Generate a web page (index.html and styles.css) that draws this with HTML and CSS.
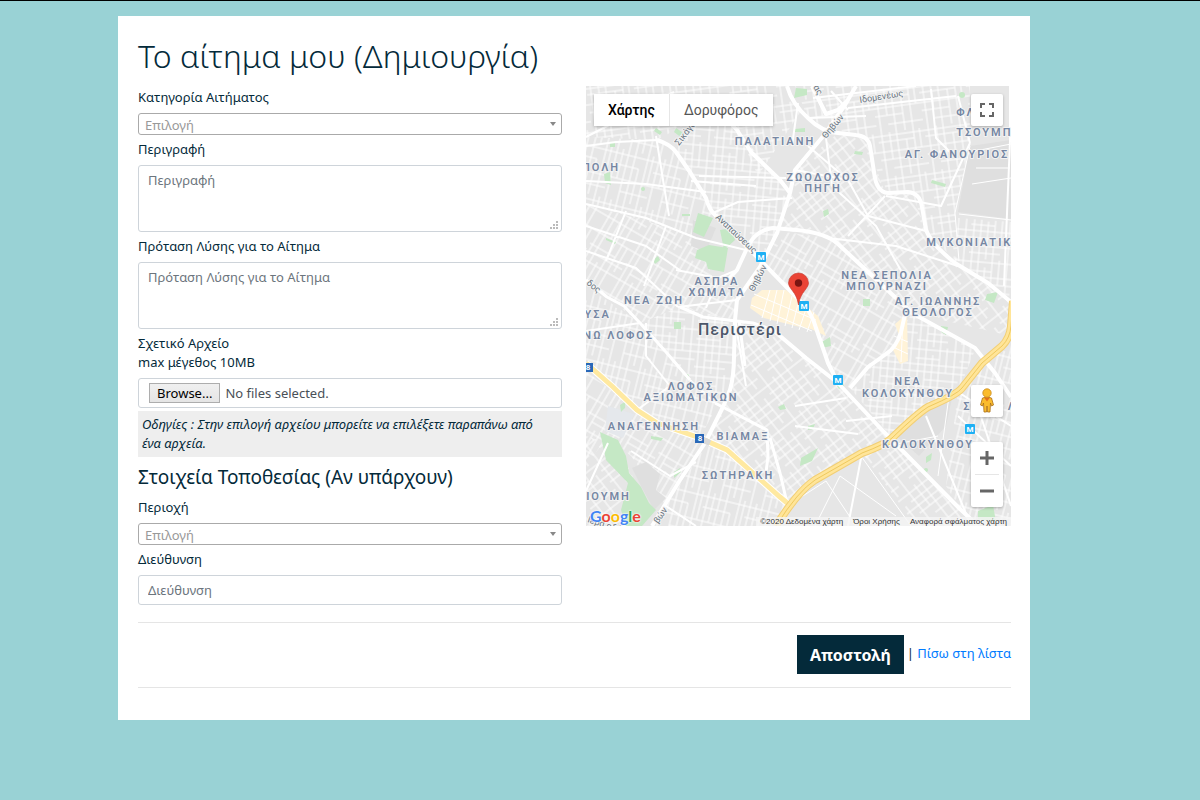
FILE: index.html
```html
<!DOCTYPE html>
<html lang="el">
<head>
<meta charset="utf-8">
<meta name="viewport" content="width=device-width, initial-scale=1">
<title>Το αίτημα μου (Δημιουργία)</title>
<link rel="stylesheet" href="styles.css">
</head>
<body>
<main class="panel">
  <h1 class="title">Το αίτημα μου (Δημιουργία)</h1>
  <form class="request">
    <div class="columns">
      <div class="fields">
        <div class="field">
          <label for="category">Κατηγορία Αιτήματος</label>
          <div class="select"><select id="category"><option>Επιλογή</option></select></div>
        </div>
        <div class="field">
          <label for="description">Περιγραφή</label>
          <textarea id="description" class="control" placeholder="Περιγραφή"></textarea>
        </div>
        <div class="field">
          <label for="solution">Πρόταση Λύσης για το Αίτημα</label>
          <textarea id="solution" class="control" placeholder="Πρόταση Λύσης για το Αίτημα"></textarea>
        </div>
        <div class="field">
          <label for="files">Σχετικό Αρχείο<br>max μέγεθος 10MB</label>
          <label class="control file">
            <input id="files" class="file-input" type="file" multiple>
            <span class="browse">Browse...</span>
            <span class="file-status">No files selected.</span>
          </label>
        </div>
        <p class="hint">Οδηγίες : Στην επιλογή αρχείου μπορείτε να επιλέξετε παραπάνω από ένα αρχεία.</p>
        <h2 class="subtitle">Στοιχεία Τοποθεσίας (Αν υπάρχουν)</h2>
        <div class="field">
          <label for="area">Περιοχή</label>
          <div class="select"><select id="area"><option>Επιλογή</option></select></div>
        </div>
        <div class="field">
          <label for="address">Διεύθυνση</label>
          <input id="address" class="control" type="text" placeholder="Διεύθυνση">
        </div>
      </div>

      <section class="map" aria-label="Χάρτης">
        <svg class="map-canvas" viewBox="0 0 425 440" preserveAspectRatio="xMidYMid slice">
          <defs>
            <pattern id="g1" width="43" height="52" patternUnits="userSpaceOnUse" patternTransform="rotate(14)">
              <path class="st" d="M3 0V52M9 0V30M15 0V52M22 0V52M28 16V52M35 0V52M40 0V30M0 5H43M0 16H28M0 30H43M15 42H43"/>
            </pattern>
            <pattern id="g2" width="47" height="44" patternUnits="userSpaceOnUse" patternTransform="rotate(-8)">
              <path class="st" d="M4 0V44M12 0V27M19 0V44M28 9V44M36 0V44M42 0V19M0 3H47M0 9H36M0 19H47M0 27H28M12 36H47"/>
            </pattern>
            <pattern id="g3" width="41" height="49" patternUnits="userSpaceOnUse" patternTransform="rotate(30)">
              <path class="st" d="M3 0V49M9 0V49M16 0V22M22 0V49M29 0V49M35 22V49M0 4H41M0 22H41M0 36H29M9 43H41"/>
            </pattern>
            <pattern id="g4" width="45" height="43" patternUnits="userSpaceOnUse" patternTransform="rotate(-38)">
              <path class="st" d="M4 0V43M13 0V26M20 0V43M29 0V43M38 12V43M0 4H45M0 12H29M0 19H45M0 26H38M13 35H45"/>
            </pattern>
            <pattern id="g5" width="44" height="46" patternUnits="userSpaceOnUse" patternTransform="rotate(5)">
              <path class="st" d="M3 0V46M10 0V46M17 8V46M24 0V46M31 0V25M39 0V46M0 3H44M0 12H24M0 18H44M0 25H44M10 33H44M0 40H31"/>
            </pattern>
          </defs>
          <rect width="425" height="440" fill="#e6e6e6"/>
          <path fill="url(#g2)" d="M0 0H201L215 25 172 90 151 44 125 24 71 54 0 51Z"/>
          <path fill="url(#g1)" d="M0 51 71 54 90 66 127 127 105 150 60 135 0 118Z"/>
          <path fill="url(#g5)" d="M86 62 127 24 151 44 204 107 191 147 177 177 127 127Z"/>
          <path fill="url(#g3)" d="M0 118 60 135 112 152 127 192 151 214 149 234 94 221 54 237 0 194Z"/>
          <path fill="url(#g1)" d="M0 200 54 237 104 294 132 318 114 352 51 324 0 277Z"/>
          <path fill="url(#g5)" d="M54 237 94 221 149 234 146 294 132 318 104 294Z"/>
          <path fill="url(#g4)" d="M149 235 187 244 252 297 306 352 229 394 204 421 141 364 119 357 146 294Z"/>
          <path fill="url(#g3)" d="M0 285 51 324 114 352 119 357 80 420 45 370 22 350 0 380Z"/>
          <path fill="url(#g4)" d="M0 350 22 357 45 385 60 440H0Z"/>
          <path fill="url(#g1)" d="M67 440 119 360 141 364 204 421 190 440Z"/>
          <path fill="url(#g4)" d="M204 107 209 84 252 47 279 52 286 71 299 106 326 107 341 147 369 177 425 216V250L326 227 276 181 242 152 191 143Z"/>
          <path fill="url(#g2)" d="M209 0H384V57L369 127 372 177 341 147 326 107 299 106 279 52 252 47 222 32Z"/>
          <path fill="url(#g5)" d="M372 132 425 136V216L369 177Z"/>
          <path fill="url(#g3)" d="M191 145 242 152 276 181 326 227 307 261 264 302 252 297 218 221 177 177Z"/>
          <path fill="url(#g5)" d="M326 227 389 264 372 306 342 321 306 352 264 302 307 261Z"/>
          <path fill="url(#g1)" d="M396 277 425 255V440H385L360 400 372 306Z"/>
          <path fill="url(#g4)" d="M306 352 372 421 385 440H330L276 367Z"/>
          <path fill="#dfdfdf" d="M384 60 425 54V133L372 126ZM107 134 130 142 120 166 105 160ZM342 325 366 312 360 340 333 370 310 350ZM46 382 60 376 74 388 70 404 80 412 68 424 55 400Z"/>
          <path class="st" d="M384 60 369 127 373 175M373 128 425 134M384 66 425 58M390 82H424M386 98 425 92M363 310 352 390M209 415 240 395 270 440M229 440 254 390 310 430M275 370 325 440M300 360 352 350"/>
          <path fill="#e5e8ec" d="M22 320 48 328 37 352 19 345Z"/>

          <!-- parks -->
          <g fill="#c5e8c5">
            <path d="M14 346 32 354 40 370 43 387 55 401 63 417 70 424 56 440H40L35 424 42 397 20 374Z"/>
            <path d="M112 127 127 132 118 151 107 146ZM111 164 123 159 142 162 138 186 122 183 120 176 109 172ZM134 144 146 142 149 154 138 164Z"/>
            <path d="M210 2 221 3 221 9 208 12ZM24 56h5v5h-5ZM18 88l6-2 1 13-6-2ZM70 42l6 4-2 3-6-4ZM90 42l9 6-3 4-8-6ZM96 128h8v2h-8ZM67 174l5-4 2 4-5 4ZM20 152l10 4-1 2-9-4ZM401 208l11-2-4 11-9-3ZM222 340l7-2-2 5-5 1ZM251 300l6-3 1 3-5 3ZM392 425l15-6 3 17-18-3ZM88 236h7v7h-7ZM34 319l6-4-1 7-4 4ZM346 94l14 4-1 3-14-4ZM237 125l5-2 1 5-5 3ZM209 43l10-1v4h-10ZM269 65l8 1-1 3-8-1ZM88 386l6-4 1 4-7 6ZM192 321l6-3 2 5-6 1ZM234 257l10-6 1 9-9 2ZM215 372l17-10-6 13-12 5ZM355 240l7 1-2 8-5-3ZM277 213h7v7h-7ZM340 371l6-4-1 7-5 3ZM65 350l12 2-2 3-10-2Z"/>
            <circle cx="376" cy="9" r="3"/><circle cx="101" cy="290" r="2"/><circle cx="340" cy="384" r="2"/><circle cx="57" cy="103" r="2"/>
          </g>
          <path fill="#fff3d8" d="M176 204 200 204 232 230 240 250 225 243 210 240 178 232 164 222 166 212ZM309 238 321 228 322 275 314 278 306 262 314 252Z"/>
          <path class="st" d="M168 208 230 234M165 219 226 245M184 204 176 232M191 204 184 235M198 204 191 238M206 210 199 240M213 214 206 242M221 220 213 244M228 226 221 246M309 262 322 268M308 250 322 256M317 232 315 276"/>

          <!-- secondary and main roads -->
          <g class="road minor">
            <path d="M0 51 60 20 88 6M71 54 30 56 0 60M0 118 60 132 110 152 160 164M70 50 78 100 83 130M127 127 152 116 206 112M113 90 200 92M105 95 170 100M222 60 262 94 282 130 340 145M240 52 246 100 290 140 318 190M209 84 262 94M242 152 310 160 372 180M299 110 262 150M227 12 330 0M262 22 370 10M372 10 384 57M345 3 350 52 370 72M384 57 355 120 300 110M0 95 60 98 120 106M212 17 206 60M222 32 280 30M245 5 262 24M151 214 92 221M151 184 132 192 90 184M132 192 120 222M260 335 306 330M209 320 260 312M209 340 272 348"/>
            <path d="M149 234 160 300M104 294 129 317M60 237 60 270 84 300M84 300 51 324M0 245 54 237M45 365 84 390 110 376M80 420 110 440M22 357 0 405M276 367 262 440M340 330 385 440M372 306 425 340M372 330 425 380M390 316 425 420M0 140 60 160 95 185M40 125 20 175M80 140 58 200M0 165 50 182 92 221"/>
          </g>
          <g class="road">
            <path d="M71 54Q84 58 90 66L104 86 120 112Q123 124 130 130L177 177 218 219Q226 228 230 242L242 277 252 297 299 347 372 421 392 440"/>
            <path d="M201 0Q206 18 222 32 236 46 252 47L270 49Q282 50 284 60L288 86Q290 106 302 107L322 106Q334 107 336 121L340 144Q345 158 369 177L402 197 425 216"/>
            <path d="M270 0 259 19 239 48 209 84 204 107 191 147 174 181 151 214 149 234 148 270Q148 290 144 304L137 321 119 357 94 394 66 440"/>
            <path d="M226 0 240 28 252 24 262 14M138 198 151 184 162 160Q170 144 187 142L211 144Q240 147 252 158L280 184 326 227 389 262 409 287 425 311"/>
            <path d="M320 224 315 246Q310 262 300 268L282 281 264 302M125 16 151 44 165 66 194 94 204 107M187 244 220 272 252 297"/>
            <path class="mid" d="M0 194 21 211 38 220 54 237 80 266 104 294M94 221 117 231 167 237 187 244M129 317 181 344 182 371 180 386M184 352 194 387 201 417M153 234 159 280"/>
          </g>
          <path d="M424 0V55L418 200" class="road minor"/>

          <!-- highways -->
          <path class="hw-edge small" d="M0 277 27 301 51 324 71 337 114 352 141 364 167 387 194 411 206 421"/>
          <path class="hw small" d="M0 277 27 301 51 324 71 337 114 352 141 364 167 387 194 411 206 421"/>
          <path d="M115 353 124 357" stroke="#d9d9d9" stroke-width="6"/>
          <path class="hw-edge" d="M427 215 425 240Q424 252 416 260L396 277 376 302Q372 308 342 321 332 327 306 352 300 358 276 367L229 394Q212 405 190 440"/>
          <path class="hw" d="M427 215 425 240Q424 252 416 260L396 277 376 302Q372 308 342 321 332 327 306 352 300 358 276 367L229 394Q212 405 190 440"/>
          <path d="M427 215 425 240Q424 252 416 260L396 277 376 302Q372 308 342 321 332 327 306 352 300 358 276 367L229 394Q212 405 190 440" fill="none" stroke="#efc95e" stroke-width="1"/>

          <!-- road names -->
          <g class="street">
            <text transform="translate(93 60) rotate(-52)">Σικάγο</text>
            <text transform="translate(129 132) rotate(43)">Αναπαύσεως</text>
            <text transform="translate(168 206) rotate(-63)">Θηβών</text>
            <text transform="translate(240 53) rotate(-50)">Θηβών</text>
            <text transform="translate(274 17) rotate(-9)">Ιδομενέως</text>
            <text transform="translate(227 1) rotate(60)">ας</text>
            <text transform="translate(0 198) rotate(38)">δος</text>
            <text transform="translate(1 436) rotate(18)">Ιερά οδός</text>
            <text transform="translate(72 438) rotate(-55)">βών</text>
          </g>

          <!-- districts -->
          <g class="place">
            <text x="189" y="59">ΠΑΛΑΤΙΑΝΗ</text>
            <text x="15" y="85">ΠΟΛΗ</text>
            <text x="237" y="95">ΖΩΟΔΟΧΟΣ</text>
            <text x="237" y="106">ΠΗΓΗ</text>
            <text x="380" y="30">ΦΛ</text>
            <text x="403" y="50">ΤΣΟΥΜΠΑ</text>
            <text x="371" y="72">ΑΓ. ΦΑΝΟΥΡΙΟΣ</text>
            <text x="388" y="160">ΜΥΚΟΝΙΑΤΙΚΑ</text>
            <text x="301" y="193">ΝΕΑ ΣΕΠΟΛΙΑ</text>
            <text x="301" y="204">ΜΠΟΥΡΝΑΖΙ</text>
            <text x="352" y="219">ΑΓ. ΙΩΑΝΝΗΣ</text>
            <text x="352" y="230">ΘΕΟΛΟΓΟΣ</text>
            <text x="131" y="199">ΑΣΠΡΑ</text>
            <text x="131" y="210">ΧΩΜΑΤΑ</text>
            <text x="68" y="218">ΝΕΑ ΖΩΗ</text>
            <text x="7" y="232">ΟΥΣΑ</text>
            <text x="28" y="253">ΑΝΩ ΛΟΦΟΣ</text>
            <text x="105" y="304">ΛΟΦΟΣ</text>
            <text x="105" y="315">ΑΞΙΩΜΑΤΙΚΩΝ</text>
            <text x="68" y="344">ΑΝΑΓΕΝΝΗΣΗ</text>
            <text x="157" y="354">ΒΙΑΜΑΞ</text>
            <text x="152" y="393">ΣΩΤΗΡΑΚΗ</text>
            <text x="18" y="414">ΡΙΟΥΜΗ</text>
            <text x="322" y="299">ΝΕΑ</text>
            <text x="322" y="311">ΚΟΛΟΚΥΝΘΟΥ</text>
            <text x="342" y="362">ΚΟΛΟΚΥΝΘΟΥ</text>
            <text x="404" y="324">ΣΤΑΘ. Λ</text>
          </g>
          <text class="city" x="154" y="249">Περιστέρι</text>

          <!-- metro and highway badges -->
          <g class="metro">
            <rect x="170" y="166" width="10" height="10" rx="1"/><text x="175" y="174">M</text>
            <rect x="213" y="215" width="10" height="10" rx="1"/><text x="218" y="223">M</text>
            <rect x="247" y="289" width="10" height="10" rx="1"/><text x="252" y="297">M</text>
            <rect x="379" y="338" width="10" height="10" rx="1"/><text x="384" y="346">M</text>
          </g>
          <g class="route">
            <rect x="-2" y="277" width="9" height="9"/><text x="2" y="284">8</text>
            <rect x="109" y="348" width="9" height="9"/><text x="114" y="355">8</text>
          </g>

          <!-- pin -->
          <path d="M212.500 219C211 210 208 207 205.500 203.500 203.500 200.500 202.500 199 202.500 197A10 10 0 0 1 222.500 197C222.500 199 221.500 200.500 219.500 203.500 217 207 214 210 212.500 219Z" fill="#ea4335" stroke="#c5372c" stroke-width=".6"/>
          <circle cx="212.500" cy="197" r="3.700" fill="#7a1512"/>
        </svg>

        <div class="map-types">
          <button type="button" class="map-type active">Χάρτης</button>
          <button type="button" class="map-type">Δορυφόρος</button>
        </div>
        <button type="button" class="map-button fullscreen" aria-label="Πλήρης οθόνη">
          <svg width="16" height="16" viewBox="0 0 16 16"><path d="M2 6V2H6M10 2H14V6M14 10V14H10M6 14H2V10" fill="none" stroke="#666" stroke-width="2"/></svg>
        </button>
        <div class="map-tools">
          <button type="button" class="map-button" aria-label="Street View">
            <svg width="16" height="26" viewBox="0 0 16 26"><path d="M3.500 10Q8 8 12.500 10L14.500 17 12.500 18 11.500 15 11 24H8.500L8 18 7.500 24H5L4.500 15 3.500 18 1.500 17Z" fill="#fbbc2c" stroke="#a96f18" stroke-width=".8"/><path d="M5 9.500H11L8 13.500Z" fill="#e2711d"/><circle cx="8" cy="5" r="4.200" fill="#fbbc2c" stroke="#c88a1d" stroke-width=".8"/></svg>
          </button>
          <div class="zoom">
            <button type="button" aria-label="Μεγέθυνση"><svg width="14" height="14" viewBox="0 0 14 14"><path d="M0 7H14M7 0V14" stroke="#666" stroke-width="3"/></svg></button>
            <button type="button" aria-label="Σμίκρυνση"><svg width="14" height="14" viewBox="0 0 14 14"><path d="M0 7H14" stroke="#666" stroke-width="3"/></svg></button>
          </div>
        </div>
        <a class="google" href="#" aria-label="Google"><span class="blue">G</span><span class="red">o</span><span class="yellow">o</span><span class="blue">g</span><span class="green">l</span><span class="red">e</span></a>
        <div class="credits">
          <span>©2020 Δεδομένα χάρτη</span>
          <a href="#">Όροι Χρήσης</a>
          <a href="#">Αναφορά σφάλματος χάρτη</a>
        </div>
      </section>
    </div>

    <div class="actions">
      <button type="submit" class="submit">Αποστολή</button>
      <span class="back">| <a href="#">Πίσω στη λίστα</a></span>
    </div>
  </form>
</main>
</body>
</html>
```
FILE: styles.css
```css
* { box-sizing: border-box; }

body {
  margin: 0;
  padding: 15px 170px 80px 118px;
  border-top: 1px solid #000;
  background: #99d2d5;
  color: #042a3a;
  font: 13px/19px "Noto Sans", "Open Sans", sans-serif;
}

button, input, select, textarea { font: inherit; }
a { color: #007bff; text-decoration: none; }

.panel {
  padding: 20px 19px 32px 20px;
  background: #fff;
}

.title {
  margin: 0 0 11px;
  padding-top: 1px;
  font-size: 32px;
  font-weight: 300;
  line-height: 38px;
}

.columns {
  display: grid;
  grid-template-columns: 424fr 425fr;
  gap: 24px;
  align-items: start;
}

.fields { padding-top: 2px; }
.field { display: flex; flex-direction: column; gap: 6px; }
.field + .field { margin-top: 5px; }

.control {
  display: block;
  width: 100%;
  height: 30px;
  padding: 5px 9px;
  border: 1px solid #ced4da;
  border-radius: 3px;
  background: #fff;
  color: #495057;
}
.control::placeholder { color: #6c757d; opacity: 1; }

textarea.control { height: 67px; resize: vertical; }
textarea.control::-webkit-resizer {
  background:
    linear-gradient(#bbb, #bbb) right 3px bottom 2px / 2px 2px no-repeat,
    linear-gradient(#bbb, #bbb) right 6px bottom 2px / 2px 2px no-repeat,
    linear-gradient(#bbb, #bbb) right 9px bottom 2px / 2px 2px no-repeat,
    linear-gradient(#bbb, #bbb) right 3px bottom 5px / 2px 2px no-repeat,
    linear-gradient(#bbb, #bbb) right 6px bottom 5px / 2px 2px no-repeat,
    linear-gradient(#bbb, #bbb) right 3px bottom 8px / 2px 2px no-repeat;
}

.select { position: relative; }
.select select {
  display: block;
  width: 100%;
  height: 22px;
  padding: 2px 20px 0 6px;
  border: 1px solid #aaa;
  border-radius: 3px;
  appearance: none;
  background: #fff;
  color: #999;
}
.select::after {
  content: "";
  position: absolute;
  top: 9px;
  right: 6px;
  border: solid transparent;
  border-width: 4px 3px 0;
  border-top-color: #888;
}

.file {
  position: relative;
  display: flex;
  align-items: center;
  gap: 5px;
  padding: 0 10px;
}
.file-input { position: absolute; opacity: 0; width: 1px; height: 1px; }
.browse {
  padding: 0 7px;
  border: 1px solid #adadad;
  background: linear-gradient(#f0f0f0, #e5e5e5);
  color: #000;
  line-height: 18px;
}

.hint {
  margin: 3px 0 0;
  padding: 4px 8px 4px 4px;
  background: #eee;
  font-style: italic;
}

.subtitle {
  margin: 8px 0 9px;
  font-size: 19px;
  font-weight: 400;
  line-height: 24px;
}

.actions {
  display: flex;
  justify-content: flex-end;
  gap: 3px;
  margin-top: 17px;
  padding: 12px 0 13px;
  border: solid #e5e5e5;
  border-width: 1px 0;
}
.submit {
  padding: 1px 13px 0;
  border: 0;
  background: #042a3a;
  color: #fff;
  font-size: 16px;
  font-weight: 700;
  line-height: 38px;
}
.back { padding-top: 9px; }

/* map */
.map {
  position: relative;
  height: 440px;
  overflow: hidden;
  font-family: Roboto, "Noto Sans", sans-serif;
}
.map-canvas { display: block; width: 100%; height: 100%; }
.st { fill: none; stroke: #fff; stroke-width: 1; }
.road { fill: none; stroke: #fff; stroke-width: 4; stroke-linejoin: round; }
.road .mid { stroke-width: 3; }
.road.minor { stroke-width: 2; }
.hw-edge { fill: none; stroke: #f2cf75; stroke-width: 8; }
.hw { fill: none; stroke: #ffe599; stroke-width: 6; }
.hw-edge.small { stroke: #fff; stroke-width: 7; }
.hw.small { stroke: #ffe9a0; stroke-width: 5; }
.place text, .city, .street text {
  paint-order: stroke;
  stroke: #f3f3f3;
  stroke-width: 2px;
  stroke-linejoin: round;
}
.place { fill: #7687a3; font-size: 11px; font-weight: 600; letter-spacing: 2px; text-anchor: middle; }
.city { fill: #4b5669; font-size: 16px; font-weight: 500; letter-spacing: 1px; text-anchor: middle; }
.street { fill: #68747f; font-size: 9px; }
.metro { fill: #1eb0f4; }
.metro text, .route text { fill: #fff; font-size: 8px; font-weight: 700; text-anchor: middle; }
.route { fill: #2968b8; }

.map button { border: 0; background: #fff; }
.map-types {
  position: absolute;
  top: 8px;
  left: 8px;
  display: flex;
  box-shadow: 0 1px 3px #0004;
}
.map-type { padding: 0 14px; color: #565656; font-size: 14px; line-height: 32px; }
.map .map-type.active { border-right: 1px solid #e6e6e6; color: #000; font-weight: 500; }
.map-button {
  display: grid;
  place-items: center;
  width: 32px;
  height: 32px;
  padding: 0;
  border-radius: 2px;
  box-shadow: 0 1px 3px #0004;
}
.fullscreen { position: absolute; top: 8px; right: 8px; }
.map-tools {
  position: absolute;
  right: 8px;
  bottom: 19px;
  display: grid;
  gap: 25px;
}
.zoom {
  display: grid;
  width: 32px;
  padding: 0 4px;
  border-radius: 2px;
  background: #fff;
  box-shadow: 0 1px 3px #0004;
}
.zoom button { display: grid; place-items: center; height: 32px; padding: 0; }
.map .zoom button + button { height: 33px; border-top: 1px solid #e6e6e6; }
.google {
  position: absolute;
  left: 4px;
  bottom: 0;
  font: 700 16px/20px Lato, sans-serif;
  text-shadow: 0 0 2px #fff, 0 0 2px #fff;
}
.blue { color: #4285f4; }
.red { color: #ea4335; }
.yellow { color: #fbbc05; }
.green { color: #34a853; }
.credits {
  position: absolute;
  right: 0;
  bottom: 0;
  display: flex;
  gap: 10px;
  padding: 0 4px;
  background: #f5f5f5cc;
  color: #333;
  font: 8px/9px "Liberation Sans", sans-serif;
}
.credits a { color: #333; }
```
